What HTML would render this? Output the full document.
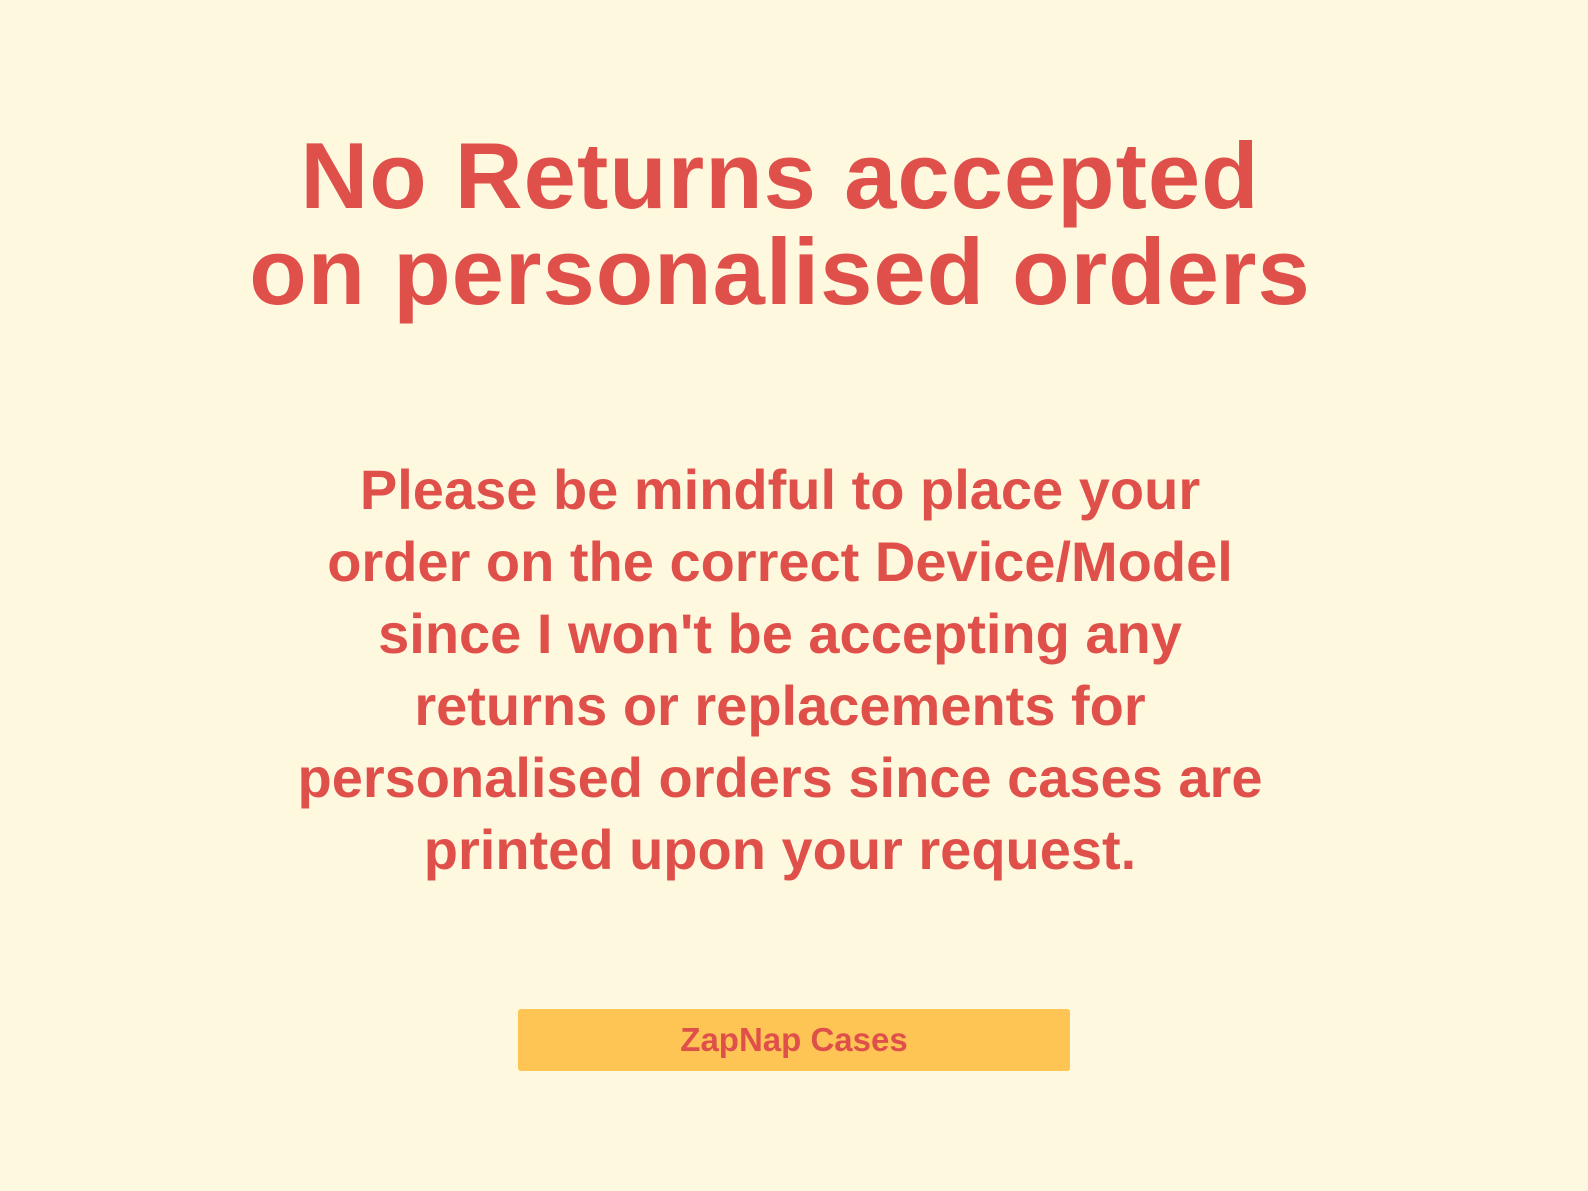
<!DOCTYPE html>
<html><head><style>
html,body{margin:0;padding:0;}
body{width:1588px;height:1191px;background:#fef8df;position:relative;overflow:hidden;font-family:"Liberation Sans",sans-serif;color:#e0504a;}
.t{position:absolute;left:0;width:1560px;text-align:center;font-weight:bold;font-size:94px;line-height:96px;top:128px;letter-spacing:1px;}
.b{position:absolute;left:0;width:1560px;text-align:center;font-weight:bold;font-size:56px;line-height:72px;top:454px;}
.btn{position:absolute;left:518px;top:1009px;width:552px;height:62px;background:#fec555;border-radius:3px;text-align:center;line-height:62px;font-size:33px;font-weight:bold;}
</style></head><body>
<div class="t">No Returns accepted<br>on personalised orders</div>
<div class="b">Please be mindful to place your<br>order on the correct Device/Model<br>since I won't be accepting any<br>returns or replacements for<br>personalised orders since cases are<br>printed upon your request.</div>
<div class="btn">ZapNap Cases</div>
</body></html>
